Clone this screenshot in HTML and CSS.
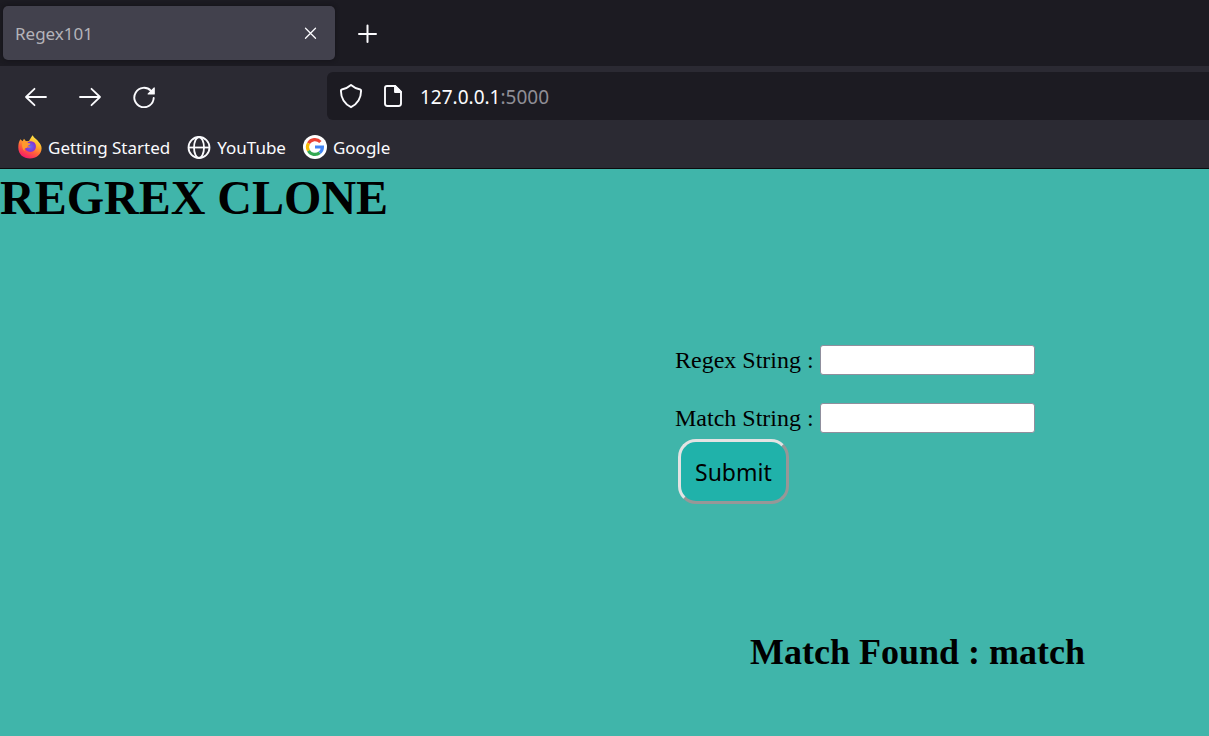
FILE: index.html
```html
<!DOCTYPE html>
<html lang="en">
<head>
<meta charset="utf-8">
<meta name="viewport" content="width=device-width, initial-scale=1">
<title>Regex101</title>
<link rel="stylesheet" href="styles.css">
</head>
<body>
<header class="browser">
  <div class="tab-strip">
    <div class="tab">
      <span class="tab-title">Regex101</span>
      <button class="icon-button tab-close" type="button" aria-label="Close tab">
        <svg width="14" height="14" viewBox="0 0 14 14" fill="none" stroke="#fbfbfe" stroke-width="1.300" stroke-linecap="round"><path d="M1.500 2.200l10 10M11.500 2.200l-10 10"/></svg>
      </button>
    </div>
    <button class="icon-button new-tab" type="button" aria-label="New tab">
      <svg width="20" height="20" viewBox="0 0 20 20" fill="none" stroke="#fbfbfe" stroke-width="2" stroke-linecap="round"><path d="M10.500 2.500v16.500M2 11h17"/></svg>
    </button>
  </div>
  <nav class="toolbar" aria-label="Navigation">
    <div class="nav-buttons">
      <button class="icon-button" type="button" aria-label="Back">
        <svg width="24" height="24" viewBox="0 0 24 24" fill="none" stroke="#fbfbfe" stroke-width="1.800" stroke-linecap="round" stroke-linejoin="round"><path d="M22 13H2M10.500 4.800L2 13l8.500 8.200"/></svg>
      </button>
      <button class="icon-button" type="button" aria-label="Forward">
        <svg width="24" height="24" viewBox="0 0 24 24" fill="none" stroke="#fbfbfe" stroke-width="1.800" stroke-linecap="round" stroke-linejoin="round"><path d="M2 13h20M13.500 4.800L22 13l-8.500 8.200"/></svg>
      </button>
      <button class="icon-button" type="button" aria-label="Reload">
        <svg width="24" height="24" viewBox="0 0 24 24" fill="none" stroke="#fbfbfe" stroke-width="1.900" stroke-linecap="round"><path d="M19 6.800A9.700 9.700 0 1 0 21.700 14"/><path d="M22.200 4v6h-6z" fill="#fbfbfe" stroke-width="1.200" stroke-linejoin="round"/></svg>
      </button>
    </div>
    <div class="address">
      <svg width="24" height="26" viewBox="0 0 24 26" fill="none" stroke="#fbfbfe" stroke-width="1.900" stroke-linejoin="round"><path d="M12 2c2.500 2.200 5.800 3.800 9.200 4.500q.9.200.9 1.200C22 15.500 19 20.500 12 24.200 5 20.500 2 15.500 1.900 7.700q0-1 .9-1.200C6.200 5.800 9.500 4.200 12 2z"/></svg>
      <svg width="20" height="24" viewBox="0 0 20 24" fill="none" stroke="#fbfbfe" stroke-width="1.900" stroke-linejoin="round"><path d="M4 2h8l6 6v11.500a2.500 2.500 0 0 1-2.500 2.500h-11A2.500 2.500 0 0 1 2 19.500V4a2 2 0 0 1 2-2z"/><path d="M12 2v6h6z" fill="#fbfbfe"/></svg>
      <span class="url">127.0.0.1<span class="port">:5000</span></span>
    </div>
  </nav>
  <nav class="bookmarks" aria-label="Bookmarks">
    <a class="bookmark" href="#">
      <svg width="24" height="24" viewBox="0 0 24 24">
        <defs>
          <linearGradient id="flame" x1=".8" y1="0" x2=".3" y2="1"><stop offset="0" stop-color="#fff44f"/><stop offset=".35" stop-color="#ffb32c"/><stop offset=".65" stop-color="#ff603b"/><stop offset="1" stop-color="#f5156c"/></linearGradient>
          <radialGradient id="globe"><stop offset="0" stop-color="#5b6df8"/><stop offset="1" stop-color="#8a2fd0"/></radialGradient>
        </defs>
        <path fill="url(#flame)" d="M2.300 4.300l2.300 2L6 3.800l2 2.500 3-.2C12 3.500 13.500 2 14.600.2c1.400 3 4.600 4 6.300 7 1.500 1.600 2.700 3.500 2.700 6C23.500 19.500 18 23.500 12 23.500 5.500 23.500.3 19.500.3 12.500c0-3.200.5-5.700 2-8.200z"/>
        <path fill="url(#globe)" d="M9.500 7.600C12 5.400 16 6.300 17.400 9c1.600 4-.6 8-5 8-3.500 0-5.300-2-5.500-4.400 1.400-1 3.400 1.200 6-.6-2-.4-3.300-.7-4.100-1.900 1-.7 1-.7.700-2.500z"/>
        <path fill="#ff9a2e" d="M4.600 6.200c1.800.2 3 .2 4.500-.2-.5 1-.1 1.700 1 2 1.200.3 2.400.3 2.300 1-.4 1.200-3.100 1.300-3.500 2.800-.1.700.2 1.300.2 1.300-2.300-.5-3.400 1.300-2.100 3.200-2.600-1.700-3.700-5.800-2.400-10.100z"/>
      </svg>
      <span>Getting Started</span>
    </a>
    <a class="bookmark" href="#">
      <svg width="24" height="24" viewBox="0 0 24 24" fill="none" stroke="#fbfbfe" stroke-width="1.800"><circle cx="12" cy="12.500" r="10.500"/><ellipse cx="12" cy="12.500" rx="5" ry="10.500"/><path d="M1.500 12.500h21"/></svg>
      <span>YouTube</span>
    </a>
    <a class="bookmark" href="#">
      <svg width="24" height="24" viewBox="0 0 24 24" fill="none" stroke-width="3.200"><circle cx="12" cy="12" r="12" fill="#fff"/><path stroke="#ea4335" d="M5.500 8.300A7.400 7.400 0 0 1 17.400 7"/><path stroke="#fbbc05" d="M5.500 15.700a7.400 7.400 0 0 1 0-7.400"/><path stroke="#34a853" d="M16.700 17.700a7.400 7.400 0 0 1-11.200-2"/><path stroke="#4285f4" d="M12 12h7.400c0 2.400-1 4.400-2.700 5.700"/></svg>
      <span>Google</span>
    </a>
  </nav>
</header>
<main class="page">
  <h1 class="title">REGREX CLONE</h1>
  <form class="regex-form">
    <div class="field">
      <label for="regex">Regex String :</label>
      <input class="text-box" id="regex" type="text">
    </div>
    <div class="field">
      <label for="match">Match String :</label>
      <input class="text-box" id="match" type="text">
    </div>
    <button class="submit" type="button">Submit</button>
  </form>
  <h2 class="result">Match Found : match</h2>
</main>
</body>
</html>
```
FILE: styles.css
```css
* {
  box-sizing: border-box;
}

body {
  margin: 0;
  min-height: 100vh;
  display: flex;
  flex-direction: column;
  background: #40b5aa;
  font-family: "Liberation Serif", "Times New Roman", serif;
  color: #000;
}

svg {
  display: block;
  flex: none;
}

.browser {
  background: #2b2a33;
  border-bottom: 1px solid #0c0c0d;
  color: #fbfbfe;
  font-family: "Segoe UI", "Noto Sans", sans-serif;
  font-size: 17px;
}

.tab-strip {
  display: flex;
  align-items: center;
  gap: 20px;
  height: 66px;
  padding: 0 3px;
  background: #1c1b22;
}

.tab {
  display: flex;
  align-items: center;
  justify-content: space-between;
  width: 332px;
  height: 54px;
  padding: 0 12px;
  border-radius: 5px;
  background: #42414d;
  box-shadow: 0 0 4px #121117;
}

.tab-title {
  color: #b4b3b9;
}

.icon-button {
  display: flex;
  align-items: center;
  justify-content: center;
  width: 24px;
  height: 24px;
  padding: 0;
  border: 0;
  background: none;
}

.toolbar {
  display: flex;
  align-items: center;
  height: 60px;
  padding-left: 24px;
}

.nav-buttons {
  display: flex;
  gap: 30px;
  width: 303px;
}

.address {
  display: flex;
  flex: 1;
  align-items: center;
  gap: 20px;
  height: 48px;
  padding-left: 12px;
  border-radius: 6px 0 0 6px;
  background: #1c1b22;
}

.url {
  margin-left: -3px;
  padding-top: 2px;
  font-size: 19px;
}

.port {
  color: #8f8e96;
}

.bookmarks {
  display: flex;
  gap: 17px;
  height: 42px;
  padding-left: 18px;
}

.bookmark {
  display: flex;
  align-items: center;
  gap: 6px;
  color: inherit;
  text-decoration: none;
}

.page {
  flex: 1;
}

.title {
  margin: 0;
  padding-top: 1px;
  font-size: 48px;
  line-height: 56px;
}

.regex-form {
  display: flex;
  flex-direction: column;
  align-items: flex-start;
  margin: 119px 0 0 675px;
  font-size: 24px;
}

.field {
  display: flex;
  align-items: center;
  gap: 6px;
  height: 30px;
  margin-bottom: 28px;
}

.field + .field {
  margin-bottom: 6px;
}

.text-box {
  width: 215px;
  height: 30px;
  border: 1px solid #8f8f9d;
  border-radius: 3px;
  background: #fff;
  font: inherit;
}

.submit {
  height: 65px;
  margin-left: 3px;
  padding: 0 14px;
  border: 3px solid;
  border-color: #e3e3e3 #979797 #979797 #e3e3e3;
  border-radius: 18px;
  background: #20b2aa;
  color: #000;
  font-family: "Segoe UI", "Noto Sans", sans-serif;
  font-size: 23px;
}

.result {
  margin: 127px 0 0 750px;
  font-size: 36px;
  line-height: 42px;
}
```
